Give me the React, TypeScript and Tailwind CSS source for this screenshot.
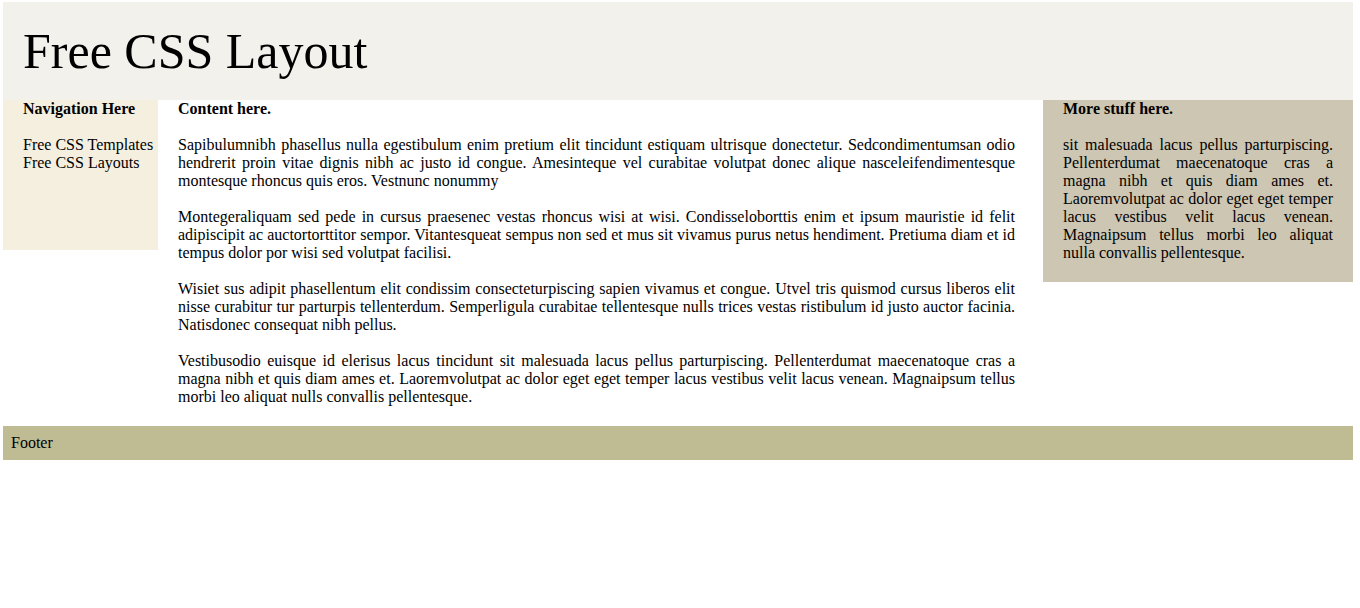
import React from 'react';

const serif = "font-['Liberation_Serif','Times_New_Roman',serif]";

const paragraphs = [
  'Sapibulumnibh phasellus nulla egestibulum enim pretium elit tincidunt estiquam ultrisque donectetur. Sedcondimentumsan odio hendrerit proin vitae dignis nibh ac justo id congue. Amesinteque vel curabitae volutpat donec alique nasceleifendimentesque montesque rhoncus quis eros. Vestnunc nonummy',
  'Montegeraliquam sed pede in cursus praesenec vestas rhoncus wisi at wisi. Condisseloborttis enim et ipsum mauristie id felit adipiscipit ac auctortorttitor sempor. Vitantesqueat sempus non sed et mus sit vivamus purus netus hendiment. Pretiuma diam et id tempus dolor por wisi sed volutpat facilisi.',
  'Wisiet sus adipit phasellentum elit condissim consecteturpiscing sapien vivamus et congue. Utvel tris quismod cursus liberos elit nisse curabitur tur parturpis tellenterdum. Semperligula curabitae tellentesque nulls trices vestas ristibulum id justo auctor facinia. Natisdonec consequat nibh pellus.',
  'Vestibusodio euisque id elerisus lacus tincidunt sit malesuada lacus pellus parturpiscing. Pellenterdumat maecenatoque cras a magna nibh et quis diam ames et. Laoremvolutpat ac dolor eget eget temper lacus vestibus velit lacus venean. Magnaipsum tellus morbi leo aliquat nulls convallis pellentesque.',
];

const App: React.FC = () => {
  return (
    <div className={`${serif} text-[16px] leading-[18px] text-black bg-white min-h-[608px] pt-[2px] pl-[3px]`}>
      <div className="w-[1350px]">
        {/* Header */}
        <header className="bg-[#f2f1ec] h-[98px] pl-[20px] pt-[21px]">
          <h1 className="text-[50px] leading-[56px]">Free CSS Layout</h1>
        </header>

        <div className="flex items-start">
          {/* Navigation */}
          <nav className="w-[155px] h-[150px] shrink-0 bg-[#f5efe0] pl-[20px]">
            <p className="font-bold">Navigation Here</p>
            <ul className="mt-[18px]">
              <li>Free CSS Templates</li>
              <li>Free CSS Layouts</li>
            </ul>
          </nav>

          {/* Content */}
          <main className="flex-1 pl-[20px] pr-[28px]">
            <p className="font-bold">Content here.</p>
            {paragraphs.map((text, i) => (
              <p key={i} className="mt-[18px] text-justify">{text}</p>
            ))}
          </main>

          {/* Extra */}
          <aside className="w-[310px] shrink-0 bg-[#cdc6b2] px-[20px] pb-[20px]">
            <p className="font-bold">More stuff here.</p>
            <p className="mt-[18px] text-justify">
              sit malesuada lacus pellus parturpiscing. Pellenterdumat maecenatoque cras a magna nibh et quis diam ames et. Laoremvolutpat ac dolor eget eget temper lacus vestibus velit lacus venean. Magnaipsum tellus morbi leo aliquat nulla convallis pellentesque.
            </p>
          </aside>
        </div>

        {/* Footer */}
        <footer className="mt-[20px] bg-[#bfbc93] px-[8px] py-[8px]">Footer</footer>
      </div>
    </div>
  );
};

export default App;
